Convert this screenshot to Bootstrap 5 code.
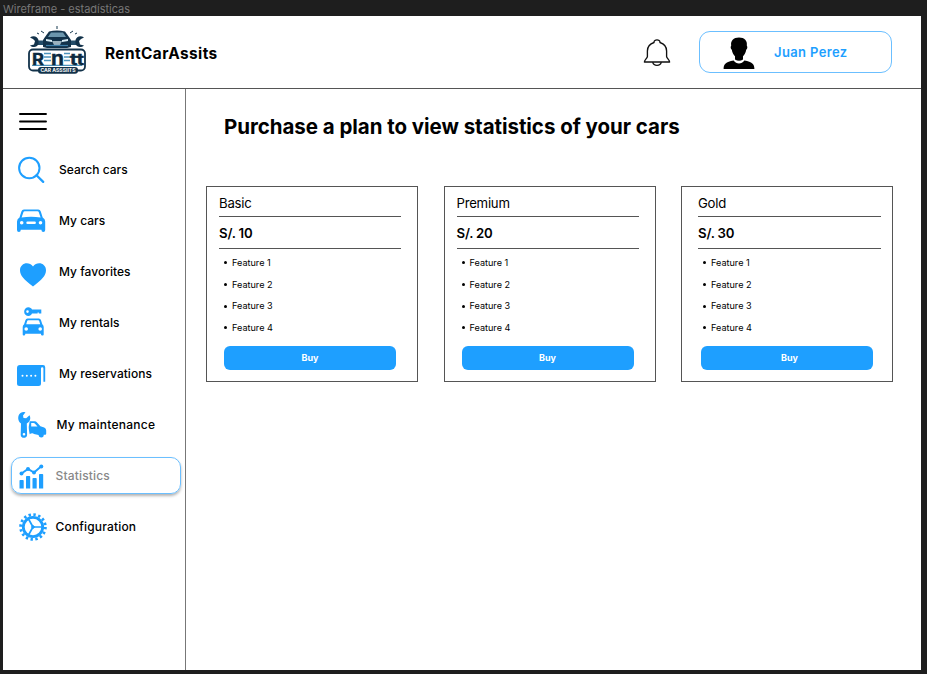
<!DOCTYPE html>
<html lang="en">
<head>
<meta charset="utf-8">
<meta name="viewport" content="width=device-width, initial-scale=1">
<title>RentCarAssits</title>
<link href="https://cdn.jsdelivr.net/npm/bootstrap@5.3.0/dist/css/bootstrap.min.css" rel="stylesheet">
<style>
:root{--brand:#1e9fff;--line:#555}
body{background:#1e1e1e;font-family:Inter,"Liberation Sans",sans-serif;color:#000;height:674px;overflow:hidden}
.frame-name{height:16px;padding:2px 0 0 3px;font-size:11px;line-height:14px;color:#777;letter-spacing:-.02px}
.frame{width:918px;height:653.5px;margin-left:3px}
.topbar{height:73px;border-bottom:1px solid var(--line);padding:2px 29px 0 23px}
.topbar .logo{margin-bottom:6px}
.brand-name{font-size:15.4px;font-weight:700;margin-left:17px;letter-spacing:.42px;padding-top:1px}
.bell{margin-right:28px}
.user-pill{width:193px;height:42px;border:1px solid #6bbfff;border-radius:11px;padding-left:23px;color:var(--brand);font-size:13px;font-weight:600;margin-top:-2px}
.user-pill svg{margin-top:2px}
.user-pill span{margin-left:19px;letter-spacing:.36px;padding-top:2px}
.sidebar{width:183px;border-right:1px solid #777;padding:7px 4px 0 8px}
.menu-btn{height:51px;padding:1px 0 0 8px;margin-bottom:4px}
.side-item{height:37px;margin-bottom:14px;font-size:12px;font-weight:450;letter-spacing:.02px;color:#000;text-decoration:none;border:1px solid transparent;border-radius:10px;white-space:nowrap}
.side-item svg,.topbar svg{flex:none}
.side-item svg{width:34px;height:34px;margin-left:4px}
.side-item span{margin-left:9px;padding-top:1px}
.side-item.near span{margin-left:5.500px;letter-spacing:.17px}
.side-item.maint span{margin-left:6.500px;letter-spacing:.26px}
.side-item.active{color:#888;border-color:#6bbfff;box-shadow:0 2px 3px rgba(0,0,0,.3)}
.page-title{font-size:20.5px;font-weight:700;line-height:26px;margin:25px 0 46px 38px;letter-spacing:-.045px}
.plans{gap:25.5px;padding-left:20px}
.plan{width:212px;height:196px;border:1px solid var(--line);padding:0 16px 0 12px}
.plan.wide-pad{padding:0 11px 0 16px}
.plan h2,.plan .price{font-size:13.2px;margin:0;border-bottom:1px solid var(--line)}
.plan h2{font-weight:400;height:30px;line-height:33px;letter-spacing:-.25px}
.plan .price{font-weight:600;height:32px;line-height:33px;letter-spacing:-.2px}
.plan ul{list-style:none;padding:3px 0 0 5px;margin:0;font-size:9.1px}
.plan li{height:21.7px;gap:5px}
.plan li::before{content:"";width:3px;height:3px;border-radius:50%;background:#000}
.plan .btn{display:block;width:172px;height:24px;margin:7px 0 0 5px;padding:0;background:var(--brand);border:0;border-radius:6px;color:#fff;font-size:9px;font-weight:700;line-height:24px}
.plan.wide-pad .btn{margin-left:3px;padding-left:5px}
</style>
</head>
<body>
<div class="frame-name">Wireframe - estadísticas</div>
<div class="frame bg-white d-flex flex-column">
  <header class="topbar d-flex align-items-center">
    <svg class="logo" width="62" height="50" viewBox="0 0 62 50" aria-label="Logo">
      <g stroke="#17384f" stroke-width="1"><path d="M31 1v3M15 6l3 2M47 6l-3 2M11 8l2 1M51 8l-2 1"/></g>
      <path d="M10 15.500h42v4.500H10z" fill="#244d69"/>
      <path d="M4 12.500c3.500-2.500 7.500-1 8.500 2.500v4c-1.500 3.500-5.500 4-8.500 1.500l4-1 1-3.500-2-2zM58 12.500c-3.500-2.500-7.500-1-8.500 2.500v4c1.500 3.500 5.500 4 8.500 1.500l-4-1-1-3.500 2-2z" fill="#12324a"/>
      <path d="M23 6.500q8-2 16 0l4 5.500 2 3v7l-4 1H21l-4-1v-7l2-3z" fill="#12324a"/>
      <path d="M25 7.500h12l3 4.500H22z" fill="#6b96ad"/><path d="M20 14l6 1v2l-6-1zM42 14l-6 1v2l6-1z" fill="#d9edf5"/>
      <path d="M26 16h10l-2 4h-6z" fill="#9bb2bf"/><path d="M20 20.500h22" stroke="#3d7ea8" stroke-width="1.200"/>
      <rect x="3" y="24.500" width="56" height="21" rx="4" fill="#fff" stroke="#12324a" stroke-width="1.800"/>
      <path d="M18 28.500h7M38 28.500h6M18 32h7M38 32h6M18 35.500h7M38 35.500h6M6 40.300h50" stroke="#4d94bd" stroke-width="1.300"/>
      <g font-family="Inter,sans-serif" font-weight="700" fill="#0c2a40" stroke="#0c2a40" stroke-width=".4"><text x="6" y="39.500" font-size="15.500" textLength="12" lengthAdjust="spacingAndGlyphs">R</text><text x="25" y="39.500" font-size="19" textLength="13" lengthAdjust="spacingAndGlyphs">n</text><text x="44" y="39.500" font-size="15.500" textLength="14" lengthAdjust="spacingAndGlyphs">tt</text></g>
      <rect x="12" y="42" width="40" height="6.800" rx="3" fill="#12324a"/>
      <text x="14.500" y="47.400" font-size="4.800" font-weight="700" font-family="Inter,sans-serif" fill="#fff" textLength="35" lengthAdjust="spacingAndGlyphs">CAR ASSSIITS</text>
    </svg>
    <div class="brand-name">RentCarAssits</div>
    <svg class="bell ms-auto" width="28" height="28" viewBox="0 0 28 28" fill="none" stroke="#111" stroke-width="1.35" stroke-linejoin="round"><path d="M11 3.5C10.8 0 17.2 0 17 3.500C21.500 5 23.600 8.500 23.600 12v5.500c0 1.700 3 3.300 3 5.500H1.400c0-2.200 3-3.800 3-5.500V12C4.400 8.500 6.500 5 11 3.500z"/><path d="M9.700 23.200c1 4.300 7.600 4.300 8.600 0"/></svg>
    <div class="user-pill d-flex align-items-center">
      <svg width="32" height="32" viewBox="0 0 32 32"><path d="M16 .5c5.500 0 8.600 3.300 7.800 8 1 1.600.5 3.500-.6 4.300-.4 3-1.700 5-3.200 6.400v3.300q-4 2.700-8 0v-3.300c-1.500-1.400-2.800-3.400-3.200-6.400-1.100-.8-1.600-2.700-.6-4.300-.8-4.700 2.300-8 7.800-8z"/><path d="M.6 32c0-5 2.200-7 10-8.600 2.700 4 8.100 4 10.800 0 7.800 1.600 10 3.600 10 8.600z"/></svg>
      <span>Juan Perez</span>
    </div>
  </header>
  <div class="d-flex flex-grow-1">
    <nav class="sidebar">
      <button class="menu-btn btn border-0 d-flex align-items-center" aria-label="Menu"><svg width="28" height="20" viewBox="0 0 28 20" stroke="#000" stroke-width="1.9" stroke-linecap="round"><path d="M1 2h26M1 9.500h26M1 17h26"/></svg></button>
      <a href="#" class="side-item d-flex align-items-center"><svg viewBox="0 0 34 34" fill="none" stroke="#1e9fff" stroke-width="2"><circle cx="13.300" cy="15" r="10.200"/><path d="M20.500 22.200l6.700 6.700" stroke-linecap="round" stroke-width="2.300"/></svg><span>Search cars</span></a>
      <a href="#" class="side-item d-flex align-items-center"><svg viewBox="1 -.5 34 34" fill="#1e9fff" fill-rule="evenodd"><path d="M9 5h14.200q2 0 2.600 2l1.900 6q2.500 1.300 2.500 4v8.500q0 2-1.900 2t-1.900-2.300H5.800Q5.800 27.500 3.900 27.500T2 25.500V17q0-2.700 2.500-4l1.900-6Q7 5 9 5zM9.700 6.800q-1 0-1.300 1L6.600 13q9.500-1.400 19 0l-1.800-5.200q-.3-1-1.300-1zM6.700 16.500a1.800 1.800 0 100 3.600 1.800 1.800 0 000-3.600zm18.800 0a1.800 1.800 0 100 3.600 1.800 1.800 0 000-3.600zM12.500 17a1.200 1.200 0 000 2.400h7.200a1.200 1.200 0 000-2.400z"/></svg><span>My cars</span></a>
      <a href="#" class="side-item d-flex align-items-center"><svg viewBox="0 -.5 34 34" fill="#1e9fff"><path d="M17 31C8 24 4 20 4 14.700 4 7.500 12.800 5 17 11c4.200-6 13-3.500 13 3.700C30 20 26 24 17 31z"/></svg><span>My favorites</span></a>
      <a href="#" class="side-item d-flex align-items-center"><svg viewBox="0 -.5 34 34" fill="#1e9fff" fill-rule="evenodd"><path d="M12.500.8c1.600 0 2.900.9 3.500 2.300h9.300v3.900h-2.500v-.9h-1.200V7H16c-.6 1.400-1.900 2.500-3.500 2.500a4.300 4.300 0 010-8.700zm-1 3a1.300 1.300 0 100 2.600 1.300 1.300 0 000-2.600zM11.500 12h11.300q1.700 0 2.200 1.700l1.300 4q1.400 1 1.400 2.700V28q0 1-1 1h-.8q-1 0-1-1.700H9.300q0 1.700-1 1.700h-.6q-1 0-1-1v-7.600q0-1.700 1.400-2.700l1.300-4q.5-1.700 2.100-1.700zm.7 1.700q-.8 0-1 .8l-1 3.200h14l-1-3.200q-.2-.8-1-.8zm-2 7a1.800 1.800 0 100 3.600 1.800 1.800 0 000-3.600zm14 0a1.800 1.800 0 100 3.600 1.800 1.800 0 000-3.600z"/></svg><span>My rentals</span></a>
      <a href="#" class="side-item d-flex align-items-center"><svg viewBox="1 -.5 34 34" fill="#1e9fff"><path d="M5 7.500h23q2.200 0 2.200 2.200v14.500h-1.800V11q0-1.300-1.200-1.300T26 11v15q0 2.500-2.500 2.500H4.500Q2 28.500 2 26V10.500q0-3 3-3z"/><g fill="#fff"><circle cx="7.500" cy="18.300" r="1"/><circle cx="11.800" cy="18.300" r="1"/><circle cx="16.100" cy="18.300" r="1"/><circle cx="20.400" cy="18.300" r="1"/></g></svg><span>My reservations</span></a>
      <a href="#" class="side-item near maint d-flex align-items-center"><svg viewBox="1 0 34 34" fill="#1e9fff" fill-rule="evenodd"><path d="M10.500 4.200L8 7.500l.5 2.500 2.700.3 3.300-3c1.800 3.200.4 6.700-2.700 8.200l.3 11.200c.1 4.200-6.500 4.200-6.400 0L6 15.500C2.500 13 2.300 7.500 5.500 5q2.200-1.600 5-.8zM9 25a1.300 1.300 0 100 2.600A1.300 1.300 0 009 25z"/><path d="M14.700 13.300h4.800q1.600 0 2.500 1.200l3.400 3.800 3.800 1.200q2 .8 2 3v3.200q0 1-1 1h-1.500a2.600 2.600 0 01-5.200.4L19 26q-.7-.7-1.700-.7-1.500 0-2.600 1-1.200-6-.9-8zm1.500 1.700v3.500h6.300l-2.700-3q-.4-.5-1.200-.5z"/></svg><span>My maintenance</span></a>
      <a href="#" class="side-item near active d-flex align-items-center"><svg viewBox="0 0 34 34" fill="#1e9fff"><path d="M3.500 21.800q0-.8.800-.8h2.600q.8 0 .8.800V29.500H3.500zM10 17.800q0-.8.800-.8h2.600q.8 0 .8.800v11.700H10zM16.500 19.800q0-.8.800-.8h2.600q.8 0 .8.800v9.700h-4.200zM23 15.800q0-.8.800-.8h2.600q.8 0 .8.800v13.700H23z"/><path d="M5.500 14.500l6.500-4.500 6 3.500 7-6" stroke="#1e9fff" stroke-width="1.900" fill="none"/><circle cx="5.500" cy="14.500" r="2"/><circle cx="12" cy="10" r="2"/><circle cx="18" cy="13.500" r="2"/><circle cx="25.300" cy="7.500" r="2"/></svg><span>Statistics</span></a>
      <a href="#" class="side-item near d-flex align-items-center"><svg viewBox="0 0 34 34" fill="none" stroke="#1e9fff"><circle cx="17" cy="17" r="12.400" stroke-width="2.800" stroke-dasharray="2.400 2.470"/><circle cx="17" cy="17" r="9.700" stroke-width="2.800"/><path d="M17 17h9M17 17l-4.500-8M17 17l-4.500 8" stroke-width="1.700"/><circle cx="17" cy="17" r="1.300" fill="#1e9fff"/></svg><span>Configuration</span></a>
    </nav>
    <main>
      <h1 class="page-title">Purchase a plan to view statistics of your cars</h1>
      <div class="plans d-flex">
        <section class="plan"><h2>Basic</h2><div class="price">S/. 10</div>
          <ul><li class="d-flex align-items-center">Feature 1</li><li class="d-flex align-items-center">Feature 2</li><li class="d-flex align-items-center">Feature 3</li><li class="d-flex align-items-center">Feature 4</li></ul>
          <button class="btn">Buy</button></section>
        <section class="plan"><h2>Premium</h2><div class="price">S/. 20</div>
          <ul><li class="d-flex align-items-center">Feature 1</li><li class="d-flex align-items-center">Feature 2</li><li class="d-flex align-items-center">Feature 3</li><li class="d-flex align-items-center">Feature 4</li></ul>
          <button class="btn">Buy</button></section>
        <section class="plan wide-pad"><h2>Gold</h2><div class="price">S/. 30</div>
          <ul><li class="d-flex align-items-center">Feature 1</li><li class="d-flex align-items-center">Feature 2</li><li class="d-flex align-items-center">Feature 3</li><li class="d-flex align-items-center">Feature 4</li></ul>
          <button class="btn">Buy</button></section>
      </div>
    </main>
  </div>
</div>
<script src="https://cdn.jsdelivr.net/npm/bootstrap@5.3.0/dist/js/bootstrap.bundle.min.js"></script>
</body>
</html>
